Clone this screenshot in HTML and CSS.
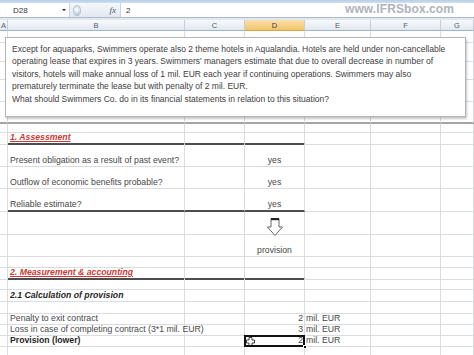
FILE: index.html
```html
<!DOCTYPE html>
<html>
<head>
<meta charset="utf-8">
<link rel="stylesheet" href="styles.css">
</head>
<body>
<div class="app">
  <div class="ribbon"></div>
  <div class="fbar">
    <div class="namebox"><span>D28</span><span class="dd"></span></div>
    <div class="fmid"><span class="knob"></span><span class="fx">fx</span></div>
    <div class="finput">2</div>
  </div>
  <div class="gap"></div>
  <div class="sheet">
    <div class="row hdr">
      <div class="hc ha">A</div><div class="hc">B</div><div class="hc">C</div><div class="hc hsel">D</div><div class="hc">E</div><div class="hc">F</div><div class="hc">G</div>
    </div>
    <div class="row h12"><div class="c"></div><div class="c"></div><div class="c"></div><div class="c"></div><div class="c"></div><div class="c"></div><div class="c"></div></div>
    <div class="row h19"><div class="c"></div><div class="c"></div><div class="c"></div><div class="c"></div><div class="c"></div><div class="c"></div><div class="c"></div></div>
    <div class="row h18"><div class="c"></div><div class="c"></div><div class="c"></div><div class="c"></div><div class="c"></div><div class="c"></div><div class="c"></div></div>
    <div class="row h22"><div class="c"></div><div class="c"></div><div class="c"></div><div class="c"></div><div class="c"></div><div class="c"></div><div class="c"></div></div>
    <div class="row h22 thick"><div class="c"></div><div class="c"></div><div class="c"></div><div class="c"></div><div class="c"></div><div class="c"></div><div class="c"></div></div>
    <div class="row h9"><div class="c"></div><div class="c"></div><div class="c"></div><div class="c"></div><div class="c"></div><div class="c"></div><div class="c"></div></div>
    <div class="row h11"><div class="c"></div><div class="c u sec">1. Assessment</div><div class="c u"></div><div class="c u"></div><div class="c"></div><div class="c"></div><div class="c"></div></div>
    <div class="row h23"><div class="c"></div><div class="c">Present obligation as a result of past event?</div><div class="c"></div><div class="c ctr">yes</div><div class="c"></div><div class="c"></div><div class="c"></div></div>
    <div class="row h22"><div class="c"></div><div class="c">Outflow of economic benefits probable?</div><div class="c"></div><div class="c ctr">yes</div><div class="c"></div><div class="c"></div><div class="c"></div></div>
    <div class="row h23"><div class="c"></div><div class="c u">Reliable estimate?</div><div class="c u"></div><div class="c u ctr">yes</div><div class="c"></div><div class="c"></div><div class="c"></div></div>
    <div class="row h23"><div class="c"></div><div class="c"></div><div class="c"></div><div class="c ctr">
      <svg class="arrow" width="18" height="20" viewBox="0 0 18 20"><path d="M5 1.5H13V10H16.5L9 18.5L1.5 10H5Z" fill="#fff" stroke="#666" stroke-width="1"/><rect x="5" y="1" width="8" height="2.2" fill="#222"/></svg>
    </div><div class="c"></div><div class="c"></div><div class="c"></div></div>
    <div class="row h22"><div class="c"></div><div class="c"></div><div class="c"></div><div class="c ctr">provision</div><div class="c"></div><div class="c"></div><div class="c"></div></div>
    <div class="row h11"><div class="c"></div><div class="c"></div><div class="c"></div><div class="c"></div><div class="c"></div><div class="c"></div><div class="c"></div></div>
    <div class="row h11"><div class="c"></div><div class="c u sec">2. Measurement &amp; accounting</div><div class="c u"></div><div class="c u"></div><div class="c"></div><div class="c"></div><div class="c"></div></div>
    <div class="row h11"><div class="c"></div><div class="c"></div><div class="c"></div><div class="c"></div><div class="c"></div><div class="c"></div><div class="c"></div></div>
    <div class="row h12"><div class="c"></div><div class="c sub">2.1 Calculation of provision</div><div class="c"></div><div class="c"></div><div class="c"></div><div class="c"></div><div class="c"></div></div>
    <div class="row h12"><div class="c"></div><div class="c"></div><div class="c"></div><div class="c"></div><div class="c"></div><div class="c"></div><div class="c"></div></div>
    <div class="row h11"><div class="c"></div><div class="c">Penalty to exit contract</div><div class="c"></div><div class="c num">2</div><div class="c unit">mil. EUR</div><div class="c"></div><div class="c"></div></div>
    <div class="row h11"><div class="c"></div><div class="c">Loss in case of completing contract (3*1 mil. EUR)</div><div class="c"></div><div class="c num">3</div><div class="c unit">mil. EUR</div><div class="c"></div><div class="c"></div></div>
    <div class="row h11"><div class="c"></div><div class="c bold">Provision (lower)</div><div class="c"></div><div class="c num sel">
      <svg class="cursor" width="9" height="9" viewBox="0 0 9 9"><path d="M3 0.5H6V3H8.5V6H6V8.5H3V6H0.5V3H3Z" fill="#fff" stroke="#111" stroke-width="0.8"/></svg>
      2<span class="handle"></span></div><div class="c unit">mil. EUR</div><div class="c"></div><div class="c"></div></div>
    <div class="row h11"><div class="c"></div><div class="c"></div><div class="c"></div><div class="c"></div><div class="c"></div><div class="c"></div><div class="c"></div></div>
  </div>
  <div class="watermark">www.IFRSbox.com</div>
  <div class="textbox">
    Except for aquaparks, Swimmers operate also 2 theme hotels in Aqualandia. Hotels are held under non-cancellable<br>
    operating lease that expires in 3 years. Swimmers' managers estimate that due to overall decrease in number of<br>
    visitors, hotels will make annual loss of 1 mil. EUR each year if continuing operations. Swimmers may also<br>
    prematurely terminate the lease but with penalty of 2 mil. EUR.<br>
    What should Swimmers Co. do in its financial statements in relation to this situation?
  </div>
</div>
</body>
</html>
```

FILE: styles.css
```css
* { box-sizing: border-box; margin: 0; padding: 0; }
html, body { width: 474px; height: 355px; overflow: hidden; background: #fff; }
body { font-family: "Liberation Sans", Arial, sans-serif; color: #333; }

.app { position: relative; width: 474px; height: 355px; overflow: hidden; }

.ribbon { height: 3px; background: linear-gradient(#b7cde8, #cfdff1); }

.fbar { display: flex; height: 15px; background: #fff; border-bottom: 1px solid #abbccf; }
.namebox { width: 70px; display: flex; align-items: center; justify-content: space-between; padding: 0 3px 0 13px; font-size: 8px; color: #333; border-right: 1px solid #cad4df; }
.dd { width: 0; height: 0; border-left: 2px solid transparent; border-right: 2px solid transparent; border-top: 2px solid #222; }
.fmid { width: 51px; display: flex; align-items: center; justify-content: space-between; padding: 0 4px 0 3px; background: linear-gradient(#f5f8fc, #e2e9f2); border-right: 1px solid #cad4df; }
.knob { width: 8px; height: 11px; border-radius: 50%; background: radial-gradient(circle at 40% 40%, #ffffff, #c9d4e1 70%, #9fb0c4); border: 1px solid #b3c1d1; }
.fx { font-family: "Liberation Serif", serif; font-style: italic; font-size: 9px; color: #555; }
.finput { flex: 1; padding-left: 5px; font-size: 8px; display: flex; align-items: center; }
.gap { height: 2px; background: #e3e8ee; }

.row { display: grid; grid-template-columns: 8px 177px 60px 60px 66px 70px 33px; }
.hdr { height: 11px; }
.hc { display: flex; align-items: center; justify-content: center; font-size: 7.5px; color: #4f6077; background: linear-gradient(#f7f9fc, #e2e8f0); border-right: 1px solid #c3cedb; border-bottom: 1px solid #9fb3c9; overflow: hidden; }
.ha { justify-content: flex-end; padding-right: 1px; }
.hsel { background: linear-gradient(#fae0ac, #f2c46a); color: #3a3a3a; border-bottom-color: #d6a64a; }

.h9 { height: 9px; } .h11 { height: 11px; } .h12 { height: 12px; } .h18 { height: 18px; }
.h19 { height: 19px; } .h22 { height: 22px; } .h23 { height: 23px; }

.c { position: relative; display: flex; align-items: flex-end; font-size: 8.7px; line-height: 9px; white-space: nowrap; padding: 0 2px 1px; color: #484848; border-right: 1px solid #d9dce1; border-bottom: 1px solid #d9dce1; }
.thick .c { border-bottom: 2px solid #a4a4a4; }
.c.u { border-bottom: 2px solid #4d4d4d; }
.ctr { justify-content: center; }
.num { justify-content: flex-end; padding-right: 1px; }
.unit { padding-left: 1px; }
.sec { color: #c93a36; font-weight: bold; font-style: italic; text-decoration: underline; }
.sub { font-weight: bold; font-style: italic; color: #262626; }
.bold { font-weight: bold; color: #262626; }

.arrow { position: absolute; top: 5px; left: 21px; }
.sel::after { content: ""; position: absolute; left: -1px; top: -1px; right: -1px; bottom: -1px; border: 2px solid #111; }
.handle { position: absolute; right: -3px; bottom: -3px; width: 4px; height: 4px; background: #111; border: 1px solid #fff; z-index: 2; }
.cursor { position: absolute; left: 1px; top: 1px; }

.watermark { position: absolute; left: 345px; top: 3px; font-size: 12px; line-height: 13px; font-weight: bold; color: #adb4bc; letter-spacing: 0.1px; }

.textbox { position: absolute; left: 5px; top: 37px; width: 461px; height: 80px; background: #fff; border: 1px solid #b5b5b5; box-shadow: 1px 2px 2px rgba(0,0,0,0.22); padding: 5px 6px; font-size: 8.5px; line-height: 12.4px; color: #404040; white-space: nowrap; }
```
